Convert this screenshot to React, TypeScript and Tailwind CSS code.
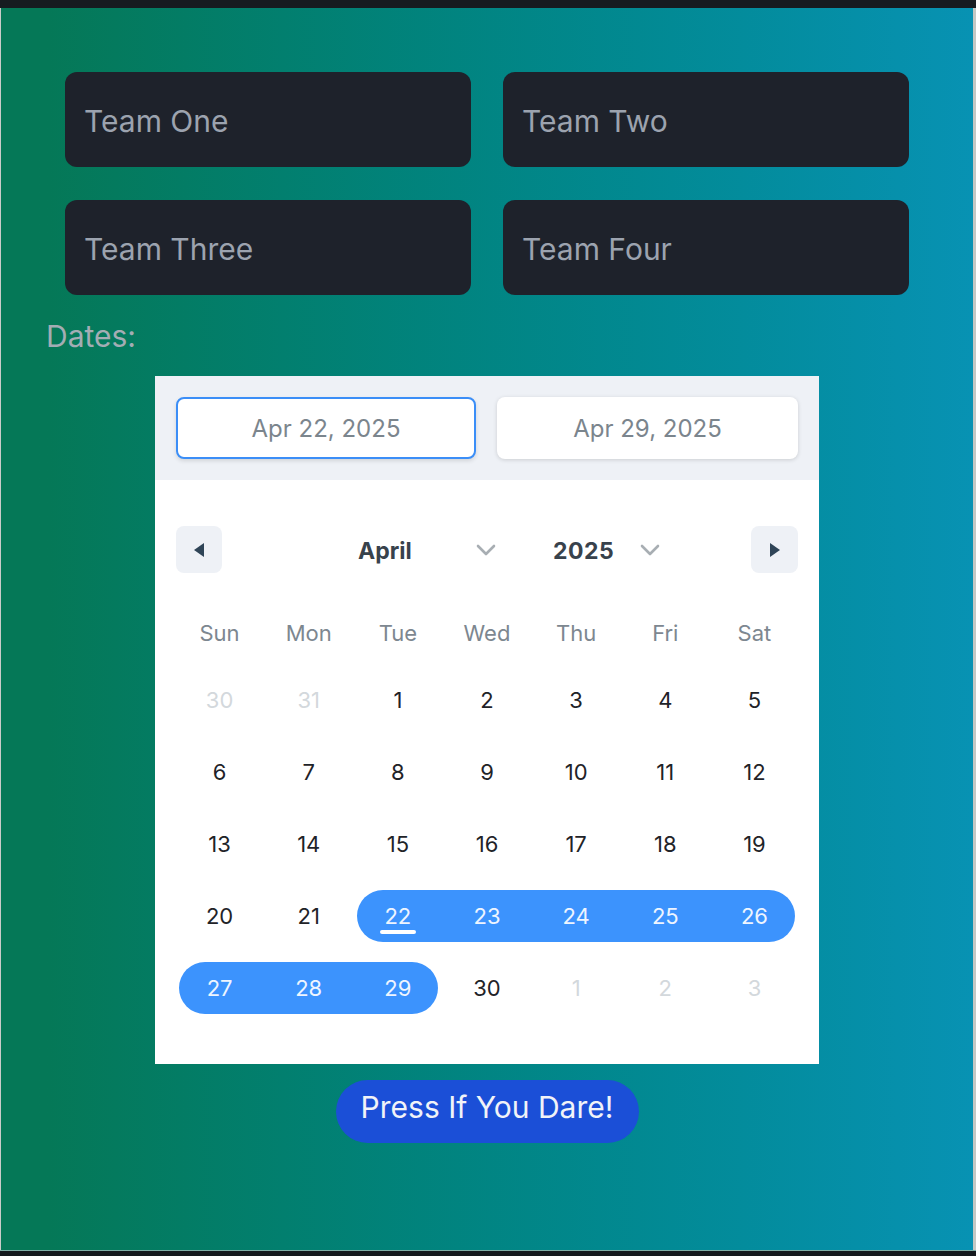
import React from "react";

const weekdays = ["Sun", "Mon", "Tue", "Wed", "Thu", "Fri", "Sat"];

type Day = { n: number; muted?: boolean };

const rows: Day[][] = [
  [{ n: 30, muted: true }, { n: 31, muted: true }, { n: 1 }, { n: 2 }, { n: 3 }, { n: 4 }, { n: 5 }],
  [{ n: 6 }, { n: 7 }, { n: 8 }, { n: 9 }, { n: 10 }, { n: 11 }, { n: 12 }],
  [{ n: 13 }, { n: 14 }, { n: 15 }, { n: 16 }, { n: 17 }, { n: 18 }, { n: 19 }],
  [{ n: 20 }, { n: 21 }, { n: 22 }, { n: 23 }, { n: 24 }, { n: 25 }, { n: 26 }],
  [{ n: 27 }, { n: 28 }, { n: 29 }, { n: 30 }, { n: 1, muted: true }, { n: 2, muted: true }, { n: 3, muted: true }],
];

function inRange(r: number, c: number) {
  if (r === 3 && c >= 2) return true;
  if (r === 4 && c <= 2) return true;
  return false;
}
function isStart(r: number, c: number) {
  return (r === 3 && c === 2) || (r === 4 && c === 0);
}
function isEnd(r: number, c: number) {
  return (r === 3 && c === 6) || (r === 4 && c === 2);
}

function Chevron() {
  return (
    <svg width="20" height="12" viewBox="0 0 20 12" fill="none">
      <path d="M2 2 L10 10 L18 2" stroke="#a8aeb3" strokeWidth="2.6" strokeLinecap="round" strokeLinejoin="round" />
    </svg>
  );
}

export default function App() {
  return (
    <div className="w-[976px] h-[1256px] bg-[#15191e] flex flex-col overflow-hidden" style={{ fontFamily: "Inter, 'Noto Sans', sans-serif" }}>
      <div className="h-[8px] shrink-0 bg-[#161b20]" />
      <div className="flex h-[1242px] shrink-0">
        <div className="w-[1px] bg-[#c9ccc9]" />
        <div className="w-[972px] bg-linear-to-r from-[#057857] from-[5%] to-[#0892b3] flex flex-col">
          <div className="grid grid-cols-2 gap-x-[32px] gap-y-[33px] px-[64px] pt-[64px]">
            {["Team One", "Team Two", "Team Three", "Team Four"].map((t) => (
              <div key={t} className="h-[95px] rounded-[12px] bg-[#1e222b] flex items-center px-[19px] pt-[3px] text-[30px] text-[#9ca3af]">
                {t}
              </div>
            ))}
          </div>
          <div className="pl-[45px] mt-[24px] text-[30px] leading-[34px] text-[#a3adb4]">Dates:</div>
          <div className="mx-auto mt-[23px] w-[664px] bg-white">
            <div className="h-[104px] bg-[#eef1f6] flex items-center gap-[21px] px-[21px]">
              <div className="w-[300px] h-[62px] rounded-[8px] bg-white border-2 border-[#3b8ef7] shadow-[0_2px_4px_rgba(0,0,0,0.12)] flex items-center justify-center pt-[2px] text-[24px] text-[#7b858d]">
                Apr 22, 2025
              </div>
              <div className="w-[301px] h-[62px] rounded-[8px] bg-white shadow-[0_1px_4px_rgba(0,0,0,0.15)] flex items-center justify-center pt-[2px] text-[24px] text-[#7b858d]">
                Apr 29, 2025
              </div>
            </div>
            <div className="px-[21px] pt-[46px] flex items-center">
              <div className="w-[46px] h-[47px] rounded-[8px] bg-[#eef1f6] flex items-center justify-center">
                <svg width="12" height="14" viewBox="0 0 12 14"><path d="M11 0 L11 14 L1 7 Z" fill="#2f4457" /></svg>
              </div>
              <div className="ml-[136px] w-[138px] flex items-center justify-between">
                <span className="text-[23px] font-bold text-[#38424c] pt-[4px]">April</span>
                <Chevron />
              </div>
              <div className="ml-[57px] w-[107px] flex items-center justify-between">
                <span className="text-[23px] font-bold text-[#38424c] tracking-[0.5px] pt-[4px]">2025</span>
                <Chevron />
              </div>
              <div className="ml-auto w-[47px] h-[47px] rounded-[8px] bg-[#eef1f6] flex items-center justify-center">
                <svg width="12" height="14" viewBox="0 0 12 14"><path d="M1 0 L1 14 L11 7 Z" fill="#2f4457" /></svg>
              </div>
            </div>
            <div className="px-[20px] pb-[40px]">
              <div className="grid grid-cols-7 mt-[40px] h-[40px] items-center">
                {weekdays.map((w) => (
                  <div key={w} className="text-center text-[22px] text-[#7d8790]">{w}</div>
                ))}
              </div>
              <div className="mt-[11px]">
                {rows.map((row, r) => (
                  <div key={r} className="grid grid-cols-7 h-[72px]">
                    {row.map((d, c) => {
                      const sel = inRange(r, c);
                      const start = isStart(r, c);
                      const end = isEnd(r, c);
                      return (
                        <div key={c} className="flex items-center">
                          <div
                            className={
                              "h-[52px] flex-1 flex items-center justify-center text-[22px] " +
                              (sel ? "bg-[#3c93fd] text-[#eef5ff] " : d.muted ? "text-[#d3d8dc] " : "text-[#1f2328] ") +
                              (start ? "ml-[4px] pr-[4px] rounded-l-full " : "") +
                              (end ? "mr-[4px] pl-[4px] rounded-r-full " : "")
                            }
                          >
                            <span className="relative">
                              {d.n}
                              {r === 3 && c === 2 && (
                                <span className="absolute left-1/2 -translate-x-1/2 top-[30px] w-[36px] h-[4px] rounded-full bg-white" />
                              )}
                            </span>
                          </div>
                        </div>
                      );
                    })}
                  </div>
                ))}
              </div>
            </div>
          </div>
          <div className="mx-auto mt-[16px] w-[303px] h-[63px] rounded-full bg-[#1b4fd7] flex items-center justify-center text-[30px] text-[#f1f3f8] pb-[9px]">
            Press If You Dare!
          </div>
        </div>
        <div className="w-[3px] bg-[#c4c8c4]" />
      </div>
      <div className="h-[1px] bg-[#7fb0a8]" />
    </div>
  );
}
